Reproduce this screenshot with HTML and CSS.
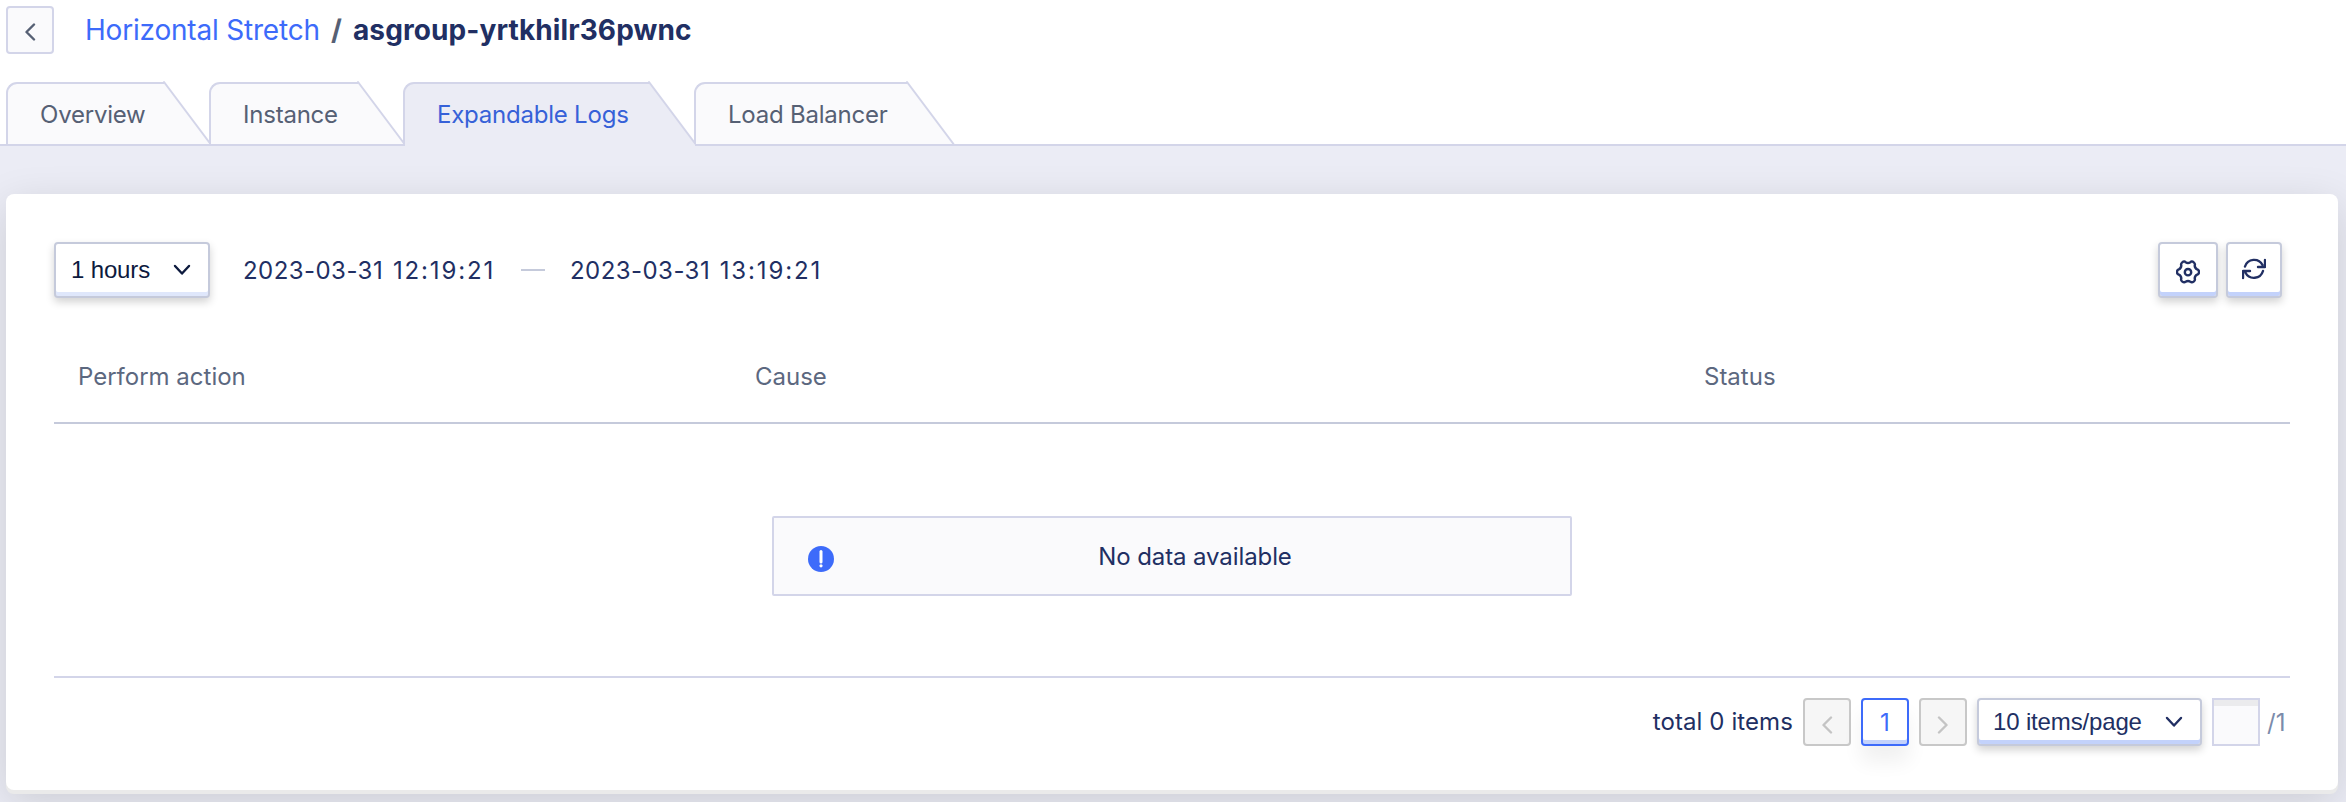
FILE: index.html
```html
<!DOCTYPE html>
<html lang="en">
<head>
<meta charset="utf-8">
<title>Horizontal Stretch</title>
<link rel="stylesheet" href="styles.css">
</head>
<body>
<header class="topbar">
  <button class="back" aria-label="Back"><svg width="12" height="18" viewBox="0 0 12 18"><path d="M10 1.5 2.5 9l7.500 7.500"/></svg></button>
  <h1 class="crumbs"><a class="crumb-link">Horizontal Stretch</a><span class="crumb-sep">/</span><span class="crumb-current">asgroup-yrtkhilr36pwnc</span></h1>
</header>
<nav class="tabs">
  <a class="tab tab-overview"><span class="tab-label">Overview</span><svg class="tab-end" width="47" height="64" viewBox="0 0 47 64"><path class="tab-fill" d="M0 0 46 62H0z"/><path class="tab-edge" d="M0 0 46.500 62"/></svg></a>
  <a class="tab tab-instance"><span class="tab-label">Instance</span><svg class="tab-end" width="47" height="64" viewBox="0 0 47 64"><path class="tab-fill" d="M0 0 46 62H0z"/><path class="tab-edge" d="M0 0 46.500 62"/></svg></a>
  <a class="tab tab-logs active"><span class="tab-label">Expandable Logs</span><svg class="tab-end" width="47" height="64" viewBox="0 0 47 64"><path class="tab-fill" d="M0 0 46 62V64H0z"/><path class="tab-edge" d="M0 0 46.500 62"/></svg></a>
  <a class="tab tab-balancer"><span class="tab-label">Load Balancer</span><svg class="tab-end" width="47" height="64" viewBox="0 0 47 64"><path class="tab-fill" d="M0 0 46 62H0z"/><path class="tab-edge" d="M0 0 46.500 62"/></svg></a>
</nav>
<main class="content">
  <section class="card">
    <div class="toolbar">
      <button class="select range"><span>1 hours</span><svg width="18" height="12" viewBox="0 0 18 12"><path d="M2 2l7 7.500L16 2"/></svg></button>
      <span class="date"><span class="day">2023-03-31</span> <span class="time">12:19:21</span></span>
      <span class="dash"></span>
      <span class="date"><span class="day">2023-03-31</span> <span class="time">13:19:21</span></span>
      <div class="tools">
        <button class="tool tool-settings" aria-label="Settings"><svg width="24" height="24" viewBox="0 0 24 24"><path d="M6.300 2.400C7.600 1 8.800 1.100 9.600 2.300Q12 3.700 14.400 2.300C15.200 1.100 16.400 1 17.700 2.400C19 3.400 19.200 4.400 18.700 5.600Q18.800 8.200 21.200 9.300C22.500 9.600 23 10.400 23 12C23 13.600 22.500 14.400 21.200 14.700Q18.800 15.800 18.700 18.400C19.200 19.600 19 20.600 17.700 21.600C16.400 22.600 15.200 22.500 14.400 21.700Q12 20.300 9.600 21.700C8.800 22.500 7.600 22.600 6.300 21.600C5 20.600 4.800 19.600 5.300 18.400Q5.200 15.800 2.800 14.700C1.500 14.400 1 13.600 1 12C1 10.400 1.500 9.600 2.800 9.300Q5.200 8.200 5.300 5.600C4.800 4.400 5 3.400 6.300 2.400z"/><circle cx="12" cy="12.200" r="3.200"/></svg></button>
        <button class="tool tool-refresh" aria-label="Refresh"><svg width="24" height="22" viewBox="0 0 24 22"><path d="M3 8.500A9.500 9.500 0 0 1 20.500 7M21 13a9.500 9.500 0 0 1-17.500 1.800M16 9h7V2M1 20v-7h7"/></svg></button>
      </div>
    </div>
    <div class="thead"><span>Perform action</span><span>Cause</span><span>Status</span></div>
    <div class="tbody">
      <div class="empty"><svg width="26" height="26" viewBox="0 0 26 26"><circle cx="13" cy="13" r="13" fill="#3d6bfa"/><path d="M13 5.500V16" stroke="#fff" stroke-width="3" stroke-linecap="round"/><circle cx="13" cy="19.800" r="1.600" fill="#fff"/></svg><span>No data available</span></div>
    </div>
    <footer class="pager">
      <span class="total">total 0 items</span>
      <button class="page disabled" aria-label="Previous"><svg width="12" height="18" viewBox="0 0 12 18"><path d="M10 1.500 2.500 9l7.500 7.500"/></svg></button>
      <button class="page current">1</button>
      <button class="page disabled" aria-label="Next"><svg width="12" height="18" viewBox="0 0 12 18"><path d="M2 1.500 9.500 9 2 16.500"/></svg></button>
      <button class="select size"><span>10 items/page</span><svg width="18" height="12" viewBox="0 0 18 12"><path d="M2 2l7 7.500L16 2"/></svg></button>
      <span class="jump"></span>
      <span class="pages">/1</span>
    </footer>
  </section>
</main>
</body>
</html>
```
FILE: styles.css
```css
* { box-sizing: border-box; }
body {
  margin: 0;
  height: 802px;
  overflow: hidden;
  display: flex;
  flex-direction: column;
  background: #fff;
  font-family: Inter, "Liberation Sans", sans-serif;
  font-size: 24px;
  letter-spacing: -0.15px;
  color: #212f63;
}
svg { flex: none; fill: none; stroke-width: 2.4; stroke-linecap: round; stroke-linejoin: round; }
button { font: inherit; padding: 0; }
.topbar { display: flex; align-items: flex-start; height: 82px; padding: 6px; }
.back {
  width: 48px; height: 48px;
  display: flex; align-items: center; justify-content: center;
  padding: 3px 1px 0 0;
  background: #fafafc;
  border: 2px solid #d3d5e9;
  border-radius: 4px;
  stroke: #566074;
}
.crumbs { display: flex; margin: 0 0 0 31px; font-size: 28px; line-height: 49px; font-weight: 400; letter-spacing: -0.2px; white-space: nowrap; }
.crumb-link { width: 246px; color: #3d6bfa; }
.crumb-sep { width: 22px; color: #566074; font-weight: 700; }
.crumb-current { font-weight: 700; letter-spacing: 0.1px; }

.tabs { display: flex; height: 64px; padding-left: 6px; border-bottom: 2px solid #d3d5e9; color: #566074; letter-spacing: -0.22px; }
.tab { display: flex; height: 62px; margin-right: -2px; }
.tab-label {
  padding-left: 32px;
  line-height: 62px;
  background: #fafafc;
  border: solid #d3d5e9;
  border-width: 2px 0 0 2px;
  border-top-left-radius: 11px;
  white-space: nowrap;
}
.tab-end { overflow: visible; }
.tab-fill { fill: #fafafc; }
.tab-edge { stroke: #d3d5e9; stroke-width: 2; }
.tab-overview .tab-label { width: 158px; }
.tab-instance .tab-label { width: 149px; }
.tab-logs .tab-label { width: 246px; }
.tab-balancer .tab-label { width: 213px; }
.active { height: 64px; color: #3661d8; }
.active .tab-label { background: #ebecf5; }
.active .tab-fill { fill: #ebecf5; }

.content { flex: 1; padding: 48px 8px 0 6px; background: #ebecf5; }
.card {
  height: 596px;
  padding: 48px 48px 0;
  background: #fff;
  border-radius: 8px;
  box-shadow: 0 4px #eaeaea, 0 12px 44px rgba(0, 0, 0, .14);
}
.toolbar { display: flex; align-items: center; height: 56px; }
.select {
  display: flex; align-items: center; justify-content: space-between;
  background: #fff;
  border: 2px solid #c5cadb;
  border-radius: 4px;
  font-family: "Liberation Sans", Arial, sans-serif;
  letter-spacing: -0.15px;
  stroke: currentColor;
}
.range {
  width: 156px; height: 56px;
  padding: 3px 17px 3px 15px;
  color: #0d1a3e;
  box-shadow: inset 0 -4px #dfe7fb, 0 4px 8px rgba(0, 0, 0, .18);
}
.date { display: flex; width: 252px; margin-left: 33px; white-space: nowrap; }
.day { width: 151px; letter-spacing: 0.45px; }
.time { letter-spacing: 1.85px; }
.dash { width: 24px; height: 2px; margin: 0 -8px 0 26px; background: #c5cadb; }
.tools { display: flex; gap: 8px; margin-left: auto; padding-right: 8px; }
.tool {
  display: flex; align-items: center; justify-content: center;
  height: 56px;
  background: #fff;
  border: 2px solid #c5cadb;
  border-radius: 4px;
  box-shadow: inset 0 -4px #c3d2fb, 0 4px 8px rgba(0, 0, 0, .18);
  stroke: #212f63;
}
.tool-settings { width: 60px; padding-top: 4px; }
.tool-refresh { width: 56px; padding: 0 0 3px; }
.thead {
  display: grid; grid-template-columns: 677px 949px 1fr;
  height: 126px; padding: 33px 24px 0;
  line-height: 92px;
  letter-spacing: 0;
  color: #5c687f;
  border-bottom: 2px solid #c5cadb;
}
.tbody { height: 254px; display: flex; align-items: center; justify-content: center; border-bottom: 2px solid #d3d5e9; }
.empty {
  display: flex; align-items: center;
  width: 800px; height: 80px; margin: 12px 0 0 0;
  padding: 0 34px;
  background: #fafafc;
  border: 2px solid #d3d5e9;
  border-radius: 2px;
}
.empty svg { margin-top: 6px; }
.empty span { flex: 1; text-align: center; padding-left: 20px; letter-spacing: -0.1px; }
.pager { display: flex; align-items: center; justify-content: flex-end; height: 48px; margin-top: 20px; white-space: nowrap; }
.total { margin-right: 10px; padding-bottom: 1px; line-height: 46px; letter-spacing: 0.1px; }
.page {
  display: flex; align-items: center; justify-content: center;
  width: 48px; height: 48px; margin-right: 10px;
  border: 2px solid #c8c8c8;
  border-radius: 4px;
}
.disabled { padding-top: 6px; background: #f6f6f6; stroke: #c4c4c4; }
.current { color: #3d6bfa; background: #fff; border-color: #3d6bfa; box-shadow: inset 0 -4px #c3d2fb, 0 16px 20px rgba(0, 0, 0, .06); }
.size {
  width: 225px; height: 48px; margin-right: 10px;
  padding: 0 17px 0 14px;
  color: #212f63;
  box-shadow: inset 0 -4px #c3d2fb, 0 4px 8px rgba(0, 0, 0, .18);
}
.jump { width: 48px; height: 48px; background: #fafafc; border: 2px solid #d3d5e9; box-shadow: inset 0 6px #ebebed; }
.pages { width: 30px; padding-left: 7px; color: #7b8bab; letter-spacing: 0; line-height: 47px; }
```
